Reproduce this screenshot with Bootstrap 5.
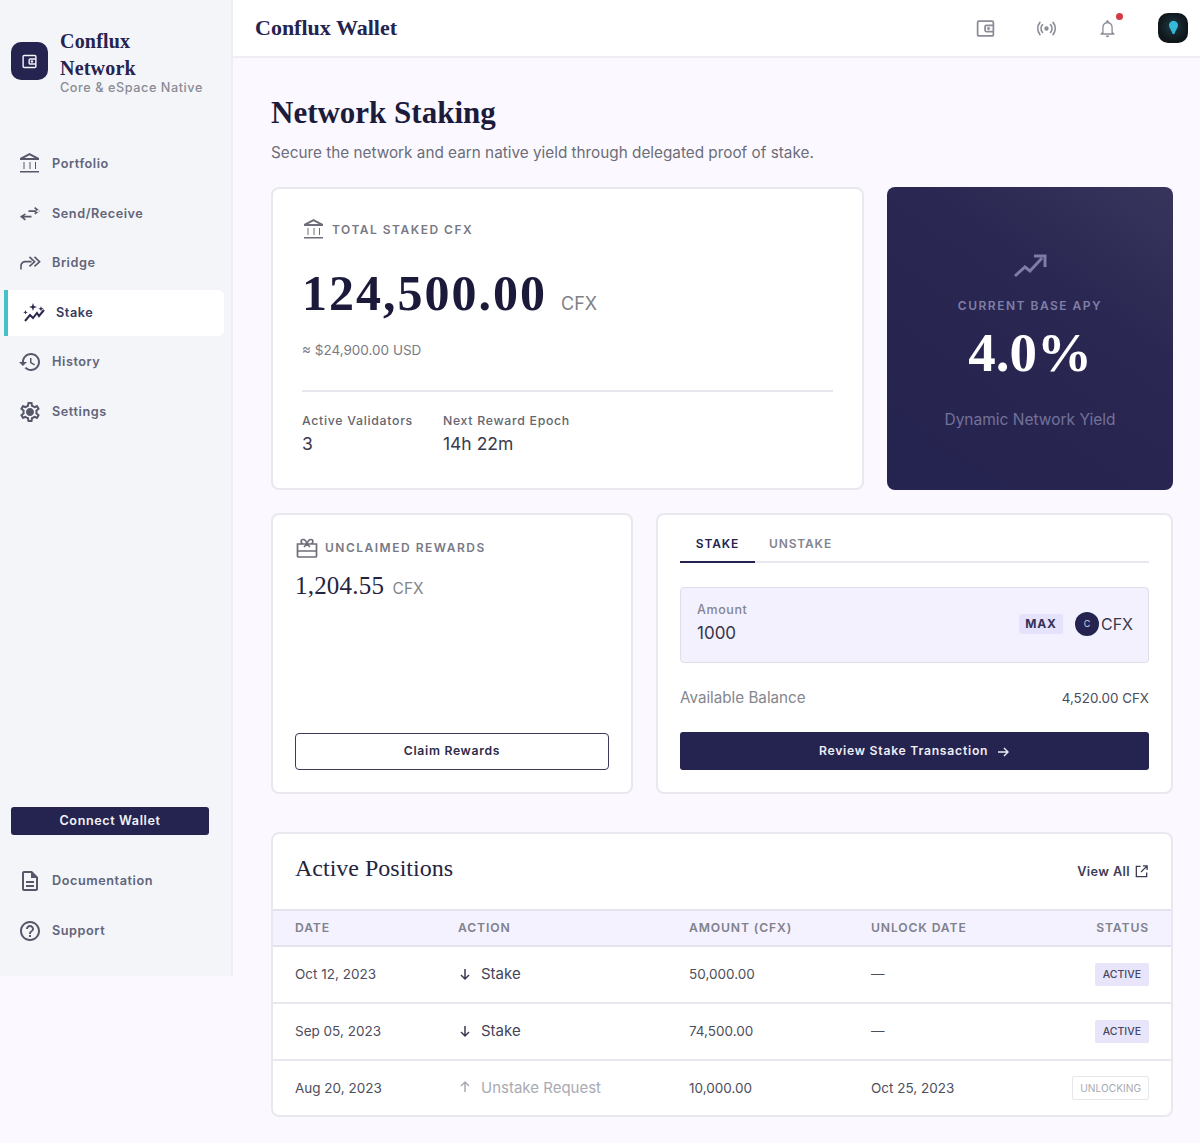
<!DOCTYPE html>
<html lang="en">
<head>
    <meta charset="UTF-8">
    <meta name="viewport" content="width=device-width, initial-scale=1">
    <title>Conflux Wallet</title>
    <link href="https://cdn.jsdelivr.net/npm/bootstrap@5.3.0/dist/css/bootstrap.min.css" rel="stylesheet">
    <style>
        body {
            background: #fbf9ff;
            font-family: Inter, "Liberation Sans", sans-serif;
            color: #1b1b3a;
            margin: 0;
        }
        .serif { font-family: "Liberation Serif", serif; }
        .side-bar {
            width: 233px;
            height: 976px;
            background: #f3f5f9;
            border-right: 2px solid #eceef3;
            flex-shrink: 0;
        }
        .brand-box { padding: 28px 11px 0; height: 141px; }
        .brand-icon {
            width: 37px;
            height: 38px;
            border-radius: 10px;
            background: #25234f;
            margin-top: 14px;
        }
        .brand-name { font-size: 20px; line-height: 27px; font-weight: 700; letter-spacing: .2px; color: #25234f; }
        .brand-sub { font-size: 12.7px; line-height: 13px; color: #8a8b94; letter-spacing: .55px; font-weight: 500; margin-top: -1px; }
        .side-link {
            height: 46px;
            margin: 0 7px 3.5px 4px;
            padding-left: 14px;
            gap: 10px;
            font-size: 12.7px;
            font-weight: 600;
            letter-spacing: .55px;
            color: #62647a;
            text-decoration: none;
            border-radius: 0 6px 6px 0;
        }
        .side-link svg { width: 24px; height: 24px; fill: #565869; flex-shrink: 0; }
        .side-link.is-active {
            background: #fff;
            color: #3c3a5e;
            border-left: 4px solid #45c1c7;
        }
        .side-link.is-active svg { fill: none; stroke: #2b2950; }
        .connect-btn {
            display: block;
            width: 198px;
            height: 28px;
            margin: 0 0 23px 11px;
            padding: 0;
            background: #25234f;
            border: 0;
            border-radius: 3px;
            color: #f2f2f8;
            font-size: 12.6px;
            font-weight: 600;
            letter-spacing: .6px;
        }
        .side-foot { padding-bottom: 19px; }
        .top-bar {
            height: 58px;
            background: #fff;
            border-bottom: 2px solid #efeef5;
            padding: 0 12px 0 22px;
        }
        .top-title { font-size: 22px; font-weight: 700; color: #25234f; margin-bottom: 2px; }
        .top-icons { gap: 40px; }
        .top-icons svg { width: 21px; height: 21px; }
        .bell-dot {
            position: absolute;
            top: -5px;
            right: -5px;
            width: 7px;
            height: 7px;
            border-radius: 50%;
            background: #d33a44;
        }
        .avatar-box {
            width: 30px;
            height: 30px;
            border-radius: 10px;
            background: radial-gradient(circle at 50% 45%, #1d3a44 0%, #10171b 65%);
        }
        .page-body { padding: 35px 27px 26px 38px; }
        .page-title { font-size: 31px; line-height: 40px; font-weight: 700; color: #1c1b3c; margin: 0 0 8px; }
        .page-sub { font-size: 15.3px; line-height: 24px; color: #6c6d78; margin: 0 0 22px; }
        .panel {
            border: 2px solid #e9e8ef;
            border-radius: 8px;
            background: #fff;
        }
        .top-row { display: grid; grid-template-columns: 593px 286px; gap: 23px; height: 303px; margin-bottom: 23px; }
        .mid-row { display: grid; grid-template-columns: 362px 517px; gap: 23px; height: 281px; margin-bottom: 38px; }
        .staked-panel { padding: 29px 29px 0; }
        .label-row { gap: 6px; }
        .cap-label { font-size: 12px; font-weight: 600; letter-spacing: 1.5px; color: #787985; }
        .label-icon { width: 24px; height: 24px; fill: #6d6e79; }
        .big-value { font-size: 50px; line-height: 56px; font-weight: 700; letter-spacing: 2px; color: #1b1a3b; }
        .big-unit { font-size: 18px; color: #808188; margin-left: 14px; }
        .value-line { margin-top: 23px; }
        .usd-line { font-size: 13.5px; color: #797a84; margin-top: 19px; line-height: 20px; }
        .stat-row { border-top: 2px solid #e6e6ec; margin-top: 30px; padding-top: 20px; gap: 30px; }
        .stat-label { font-size: 12.3px; font-weight: 500; letter-spacing: .7px; color: #65666f; line-height: 18px; }
        .stat-value { font-size: 17.5px; line-height: 28px; color: #3a3a4e; }
        .apy-panel {
            border: 0;
            border-radius: 8px;
            background: linear-gradient(215deg, #37355c 0%, #2a2852 35%, #25234f 100%);
            color: #fff;
            text-align: center;
            padding-top: 64px;
        }
        .apy-icon { width: 34px; height: 28px; display: block; margin: 0 auto; }
        .apy-label { font-size: 12px; font-weight: 600; letter-spacing: 1.5px; color: #807fa6; margin-top: 17px; line-height: 20px; }
        .apy-value { font-size: 55px; line-height: 60px; font-weight: 700; margin-top: 7px; }
        .apy-sub { font-size: 15.5px; color: #73729a; margin-top: 25px; line-height: 24px; }
        .rewards-panel { padding: 21px 22px 22px; }
        .reward-value { font-size: 25px; line-height: 36px; letter-spacing: .2px; color: #25243f; margin-top: 8px; }
        .reward-unit { font-family: Inter, sans-serif; font-size: 15.5px; letter-spacing: 0; color: #82838b; margin-left: 2px; }
        .claim-btn {
            height: 37px;
            border: 1.5px solid #3b3a5a;
            border-radius: 4px;
            background: #fff;
            color: #2c2b4a;
            font-size: 12.2px;
            font-weight: 600;
            letter-spacing: .7px;
            padding: 0;
        }
        .stake-panel { padding: 10px 22px 0; }
        .tab-strip { border-bottom: 2px solid #e9e8ef; height: 38px; margin-bottom: 24px; }
        .tab-item {
            width: 75px;
            margin-bottom: -2px;
            padding-top: 10px;
            margin-right: 14px;
            text-align: center;
            font-size: 12px;
            letter-spacing: .85px;
            font-weight: 600;
            color: #838490;
            text-decoration: none;
        }
        .tab-item.is-active { color: #25234f; border-bottom: 2px solid #25234f; }
        .tab-item + .tab-item { width: auto; }
        .amount-box {
            height: 76px;
            background: #f3f1fe;
            border: 1.5px solid #dfdee8;
            border-radius: 4px;
            padding: 0 15px 2px 16px;
        }
        .amount-label { font-size: 12.5px; font-weight: 500; letter-spacing: .6px; color: #85858f; line-height: 16px; margin-bottom: 1px; }
        .amount-value { font-size: 17px; line-height: 28px; color: #34344a; }
        .max-tag {
            width: 44px;
            height: 20px;
            line-height: 20px;
            text-align: center;
            background: #e5e2fb;
            color: #33325a;
            border-radius: 2px;
            font-size: 12px;
            font-weight: 700;
            letter-spacing: .8px;
            margin-right: 12px;
        }
        .coin-dot {
            width: 24px;
            height: 24px;
            border-radius: 50%;
            background: #25234f;
            color: #d5d4e4;
            font-size: 9px;
            line-height: 24px;
            text-align: center;
            margin-right: 2px;
        }
        .coin-name { font-size: 16px; color: #3a3a4e; }
        .balance-row { font-size: 15.2px; color: #85868e; margin: 23px 0 22px; line-height: 24px; }
        .balance-amount { font-size: 13.4px; color: #4a4b5a; }
        .review-btn {
            width: 100%;
            height: 38px;
            background: #25234f;
            border: 0;
            border-radius: 3px;
            color: #eeeef5;
            font-size: 12.2px;
            font-weight: 600;
            letter-spacing: .75px;
            padding: 0;
        }
        .positions-head { height: 75px; padding: 0 22px; }
        .positions-title { font-size: 24px; color: #25243f; margin: 0 0 6px; font-weight: 400; }
        .view-link { font-size: 12.7px; font-weight: 600; letter-spacing: .4px; color: #3c3c55; text-decoration: none; }
        .positions-table { margin: 0; table-layout: fixed; width: 100%; }
        .positions-table th {
            background: #f4f2fe;
            border-top: 2px solid #e4e3ec;
            border-bottom: 2px solid #e4e3ec;
            height: 36px;
            padding: 0;
            font-size: 12.2px;
            font-weight: 600;
            letter-spacing: .85px;
            color: #80818c;
            vertical-align: middle;
        }
        .positions-table td {
            height: 57px;
            padding: 0;
            border-bottom: 2px solid #e9e8ef;
            font-size: 13.5px;
            color: #4d4e5c;
            vertical-align: middle;
            background: transparent;
        }
        .positions-table tr:last-child td { border-bottom: 0; height: 55px; }
        .positions-table .col-first { padding-left: 22px; }
        .positions-table .col-last { padding-right: 22px; text-align: right; }
        .action-cell { font-size: 15px; color: #44445a; gap: 9px; }
        .action-cell svg { width: 14px; height: 14px; stroke: #3a3a55; fill: none; stroke-width: 1.5; margin-bottom: 2px; }
        .action-cell.is-muted { color: #a9aab2; }
        .action-cell.is-muted svg { stroke: #a9aab2; }
        .status-tag {
            display: inline-block;
            font-size: 10.5px;
            font-weight: 500;
            padding: 0 8px;
            line-height: 23px;
            border-radius: 2px;
            background: #e8e5fb;
            color: #46465f;
        }
        .status-tag.is-pending { background: #fff; color: #a9aab2; border: 1.5px solid #e6e6ec; line-height: 22px; font-weight: 400; font-size: 10.2px; padding: 0 7px; }
    </style>
</head>
<body>
<svg width="0" height="0" class="position-absolute">
    <symbol id="ic-bank" viewBox="0 0 24 24"><path d="M6.500 10h-1v7h1v-7zm6 0h-1v7h1v-7zm8.500 9H2v1.500h19V19zm-3-9h-1v7h1v-7zm-6.500-6.740L16.710 6H6.290l5.210-2.740m0-2.260L2 6v2h19V6l-9.500-5z"/></symbol>
    <symbol id="ic-swap" viewBox="0 0 24 24"><path d="M2.500 15.500h11v-1.800h-11zM6.800 11.500 2 14.600l4.800 3.900 1.100-1.300-3.200-2.600 3.300-2.100zM10.500 10h11V8.200h-11zM17.200 5l4.800 4.100-4.800 3.400-1-1.400 3-2.100-3.100-2.700z"/></symbol>
    <symbol id="ic-bridge" viewBox="0 0 24 24"><path d="M3.800 18.500H2.200V15c0-3 2.200-5.200 5.200-5.200h6.200V11.500H7.400c-2.100 0-3.600 1.500-3.600 3.500zM12 5.200l5.800 5.500-5.800 5.300-1.100-1.200 4.500-4.100-4.500-4.300zM17 5.200l5.800 5.500-5.800 5.300-1.100-1.200 4.500-4.100-4.500-4.300z"/></symbol>
    <symbol id="ic-history" viewBox="0 0 24 24"><path d="M13 3c-4.970 0-9 4.030-9 9H1l3.890 3.890.07.14L9 12H6c0-3.870 3.130-7 7-7s7 3.130 7 7-3.130 7-7 7c-1.930 0-3.680-.79-4.940-2.060l-1.420 1.420C8.270 19.990 10.510 21 13 21c4.970 0 9-4.030 9-9s-4.030-9-9-9zm-1 5v5l4.280 2.540.72-1.210-3.500-2.080V8H12z"/></symbol>
    <symbol id="ic-gear" viewBox="0 0 24 24"><path d="M19.430 12.980c.04-.32.07-.64.07-.98 0-.34-.03-.66-.07-.98l2.110-1.650c.19-.15.24-.42.12-.64l-2-3.460c-.09-.16-.26-.25-.44-.25-.06 0-.12.01-.17.03l-2.490 1c-.52-.4-1.080-.73-1.690-.98l-.38-2.650C14.460 2.180 14.250 2 14 2h-4c-.25 0-.46.18-.49.42l-.38 2.650c-.61.25-1.170.59-1.690.98l-2.490-1c-.06-.02-.12-.03-.18-.03-.17 0-.34.09-.43.25l-2 3.460c-.13.22-.07.49.12.64l2.110 1.650c-.04.32-.07.65-.07.98 0 .33.03.66.07.98l-2.110 1.650c-.19.15-.24.42-.12.64l2 3.460c.09.16.26.25.44.25.06 0 .12-.01.17-.03l2.490-1c.52.4 1.080.73 1.690.98l.38 2.650c.03.24.24.42.49.42h4c.25 0 .46-.18.49-.42l.38-2.650c.61-.25 1.170-.59 1.690-.98l2.490 1c.06.02.12.03.18.03.17 0 .34-.09.43-.25l2-3.460c.12-.22.07-.49-.12-.64l-2.110-1.650zm-1.980-1.710c.04.31.05.52.05.73 0 .21-.02.43-.05.73l-.14 1.130.89.7 1.080.84-.7 1.210-1.270-.51-1.040-.42-.9.68c-.43.32-.84.56-1.250.73l-1.060.43-.16 1.130-.2 1.350h-1.400l-.19-1.350-.16-1.130-1.060-.43c-.43-.18-.83-.41-1.230-.71l-.91-.7-1.060.43-1.270.51-.7-1.210 1.080-.84.89-.7-.14-1.130c-.03-.31-.05-.54-.05-.74s.02-.43.05-.73l.14-1.130-.89-.7-1.080-.84.7-1.210 1.270.51 1.040.42.9-.68c.43-.32.84-.56 1.250-.73l1.060-.43.16-1.130.2-1.350h1.390l.19 1.350.16 1.130 1.060.43c.43.18.83.41 1.230.71l.91.7 1.060-.43 1.270-.51.7 1.210-1.070.85-.89.7.14 1.130zM12 8c-2.210 0-4 1.790-4 4s1.790 4 4 4 4-1.790 4-4-1.790-4-4-4z"/></symbol>
    <symbol id="ic-doc" viewBox="0 0 24 24"><path d="M8 16h8v2H8zm0-4h8v2H8zm6-10H6c-1.100 0-2 .9-2 2v16c0 1.100.89 2 1.990 2H18c1.100 0 2-.9 2-2V8l-6-6zm4 18H6V4h7v5h5v11z"/></symbol>
    <symbol id="ic-help" viewBox="0 0 24 24"><path d="M11 18h2v-2h-2v2zm1-16C6.480 2 2 6.480 2 12s4.480 10 10 10 10-4.480 10-10S17.520 2 12 2zm0 18c-4.410 0-8-3.590-8-8s3.590-8 8-8 8 3.590 8 8-3.590 8-8 8zm0-14c-2.210 0-4 1.790-4 4h2c0-1.100.9-2 2-2s2 .9 2 2c0 2-3 1.750-3 5h2c0-2.250 3-2.500 3-5 0-2.210-1.790-4-4-4z"/></symbol>
    <symbol id="ic-bell" viewBox="0 0 24 24"><path d="M12 22c1.100 0 2-.9 2-2h-4c0 1.100.9 2 2 2zm6-6v-5c0-3.070-1.630-5.640-4.500-6.320V4c0-.83-.67-1.500-1.500-1.500s-1.500.67-1.500 1.500v.68C7.640 5.360 6 7.920 6 11v5l-2 2v1h16v-1l-2-2zm-1.500 1.500h-9V11c0-2.480 1.500-5 4.500-5s4.500 2.520 4.500 5z"/></symbol>
    <symbol id="ic-gift" viewBox="0 0 24 24"><path fill="none" stroke="#6d6e79" stroke-width="1.700" d="M2.500 8h19v12a1 1 0 0 1-1 1h-17a1 1 0 0 1-1-1zM2.500 15h19M8 8c-2.500-1-2.500-4.500 0-4.500 2 0 3.500 2.500 4 4.500 .5-2 2-4.500 4-4.500 2.500 0 2.500 3.500 0 4.500M12 8l-3 3M12 8l3 3"/></symbol>
    <symbol id="ic-wallet" viewBox="0 0 24 24"><path fill="none" stroke-width="2" d="M4.500 3.500h15a1.500 1.500 0 0 1 1.500 1.500v14a1.500 1.500 0 0 1-1.500 1.500h-15A1.500 1.500 0 0 1 3 19V5a1.500 1.500 0 0 1 1.500-1.500zM21 8.500h-8a1.500 1.500 0 0 0-1.500 1.500v4a1.500 1.500 0 0 0 1.500 1.500h8"/><circle cx="15.500" cy="12" r="1.300"/></symbol>
</svg>

<div class="d-flex align-items-start">
    <aside class="side-bar d-flex flex-column">
        <div class="brand-box d-flex gap-2">
            <div class="brand-icon d-flex align-items-center justify-content-center me-1">
                <svg width="17" height="17" viewBox="0 0 24 24" stroke="#f3f3f8" fill="#f3f3f8"><use href="#ic-wallet"/></svg>
            </div>
            <div>
                <div class="brand-name serif">Conflux<br>Network</div>
                <div class="brand-sub">Core &amp; eSpace Native</div>
            </div>
        </div>
        <nav class="d-flex flex-column">
            <a class="side-link d-flex align-items-center" href="#"><svg viewBox="0 0 24 24"><use href="#ic-bank"/></svg>Portfolio</a>
            <a class="side-link d-flex align-items-center" href="#"><svg viewBox="0 0 24 24"><use href="#ic-swap"/></svg>Send/Receive</a>
            <a class="side-link d-flex align-items-center" href="#"><svg viewBox="0 0 24 24"><use href="#ic-bridge"/></svg>Bridge</a>
            <a class="side-link is-active d-flex align-items-center" href="#">
                <svg viewBox="0 0 24 24" stroke-width="2"><path d="M3 20l5-6 3 3 4-5 2 3 5-6"/><path fill="#2b2950" stroke="none" d="M11 2l1 3 3 1-3 1-1 3-1-3-3-1 3-1zM19 5l.7 2 2 .7-2 .7-.7 2-.7-2-2-.7 2-.7zM3.500 9l.6 1.700 1.700.6-1.700.6-.6 1.700-.6-1.700-1.700-.6 1.700-.6z"/></svg>
                Stake</a>
            <a class="side-link d-flex align-items-center" href="#"><svg viewBox="0 0 24 24"><use href="#ic-history"/></svg>History</a>
            <a class="side-link d-flex align-items-center" href="#"><svg viewBox="0 0 24 24"><use href="#ic-gear"/></svg>Settings</a>
        </nav>
        <div class="side-foot mt-auto">
            <button class="connect-btn btn" type="button">Connect Wallet</button>
            <a class="side-link d-flex align-items-center" href="#"><svg viewBox="0 0 24 24"><use href="#ic-doc"/></svg>Documentation</a>
            <a class="side-link d-flex align-items-center" href="#"><svg viewBox="0 0 24 24"><use href="#ic-help"/></svg>Support</a>
        </div>
    </aside>

    <div class="flex-grow-1">
        <header class="top-bar d-flex align-items-center justify-content-between">
            <div class="top-title serif">Conflux Wallet</div>
            <div class="top-icons d-flex align-items-center">
                <svg viewBox="0 0 24 24" stroke="#8b8c98" fill="#8b8c98"><use href="#ic-wallet"/></svg>
                <svg viewBox="0 0 24 24" fill="none" stroke="#8b8c98" stroke-width="1.800" stroke-linecap="round"><circle cx="12" cy="12" r="1.600" fill="#8b8c98"/><path d="M7.500 7.500a7 7 0 0 0 0 9M16.500 7.500a7 7 0 0 1 0 9M4.500 5a11 11 0 0 0 0 14M19.500 5a11 11 0 0 1 0 14"/></svg>
                <div class="position-relative d-flex">
                    <svg viewBox="0 0 24 24" fill="#8b8c98"><use href="#ic-bell"/></svg>
                    <span class="bell-dot"></span>
                </div>
                <div class="avatar-box d-flex align-items-center justify-content-center">
                    <svg viewBox="0 0 24 24" width="18" height="18"><path fill="#36b8d8" d="M12 3c3.300 0 5.200 2.500 5.200 5.300 0 3-3 6-4.200 10h-2C9.800 14.300 6.800 11.300 6.800 8.300 6.800 5.500 8.700 3 12 3z"/></svg>
                </div>
            </div>
        </header>

        <main class="page-body">
            <h1 class="page-title serif">Network Staking</h1>
            <p class="page-sub">Secure the network and earn native yield through delegated proof of stake.</p>

            <div class="top-row">
                <section class="panel staked-panel">
                    <div class="label-row d-flex align-items-center">
                        <svg class="label-icon" viewBox="0 0 24 24"><use href="#ic-bank"/></svg>
                        <span class="cap-label">TOTAL STAKED CFX</span>
                    </div>
                    <div class="value-line"><span class="big-value serif">124,500.00</span><span class="big-unit">CFX</span></div>
                    <div class="usd-line">≈ $24,900.00 USD</div>
                    <div class="stat-row d-flex">
                        <div>
                            <div class="stat-label">Active Validators</div>
                            <div class="stat-value">3</div>
                        </div>
                        <div>
                            <div class="stat-label">Next Reward Epoch</div>
                            <div class="stat-value">14h 22m</div>
                        </div>
                    </div>
                </section>
                <section class="panel apy-panel">
                    <svg class="apy-icon" viewBox="0 0 34 28" fill="none" stroke="#7e7da6" stroke-width="3"><path d="M2 25l10-9 5 4 12-13"/><path d="M21 5h11v11" fill="none"/></svg>
                    <div class="apy-label">CURRENT BASE APY</div>
                    <div class="apy-value serif">4.0%</div>
                    <div class="apy-sub">Dynamic Network Yield</div>
                </section>
            </div>

            <div class="mid-row">
                <section class="panel rewards-panel d-flex flex-column">
                    <div class="label-row d-flex align-items-center">
                        <svg class="label-icon" viewBox="0 0 24 24"><use href="#ic-gift"/></svg>
                        <span class="cap-label">UNCLAIMED REWARDS</span>
                    </div>
                    <div class="reward-value serif">1,204.55 <span class="reward-unit">CFX</span></div>
                    <button class="claim-btn btn mt-auto" type="button">Claim Rewards</button>
                </section>
                <section class="panel stake-panel">
                    <div class="tab-strip d-flex">
                        <a class="tab-item is-active" href="#">STAKE</a>
                        <a class="tab-item" href="#">UNSTAKE</a>
                    </div>
                    <div class="amount-box d-flex align-items-center justify-content-between">
                        <div>
                            <div class="amount-label">Amount</div>
                            <div class="amount-value">1000</div>
                        </div>
                        <div class="d-flex align-items-center">
                            <span class="max-tag">MAX</span>
                            <span class="coin-dot">C</span>
                            <span class="coin-name">CFX</span>
                        </div>
                    </div>
                    <div class="balance-row d-flex align-items-center justify-content-between">
                        <span>Available Balance</span>
                        <span class="balance-amount">4,520.00 CFX</span>
                    </div>
                    <button class="review-btn btn" type="button">Review Stake Transaction
                        <svg class="ms-1" width="14" height="14" viewBox="0 0 14 14" fill="none" stroke="#eeeef5" stroke-width="1.400"><path d="M2 7h10M8 3l4 4-4 4"/></svg>
                    </button>
                </section>
            </div>

            <section class="panel overflow-hidden">
                <div class="positions-head d-flex align-items-center justify-content-between">
                    <h2 class="positions-title serif">Active Positions</h2>
                    <a class="view-link d-flex align-items-center gap-1" href="#">View All
                        <svg width="15" height="15" viewBox="0 0 16 16" fill="none" stroke="#3c3c55" stroke-width="1.400"><path d="M7 2.500H2.500v11h11V9M9.500 2h4.500v4.500M14 2 7.500 8.500"/></svg>
                    </a>
                </div>
                <table class="table positions-table">
                    <colgroup><col style="width:185px"><col style="width:231px"><col style="width:182px"><col style="width:146px"><col></colgroup>
                    <thead>
                        <tr>
                            <th class="col-first">DATE</th>
                            <th>ACTION</th>
                            <th>AMOUNT (CFX)</th>
                            <th>UNLOCK DATE</th>
                            <th class="col-last">STATUS</th>
                        </tr>
                    </thead>
                    <tbody>
                        <tr>
                            <td class="col-first">Oct 12, 2023</td>
                            <td><div class="action-cell d-flex align-items-center"><svg viewBox="0 0 14 14"><path d="M7 2v10M3 8l4 4 4-4"/></svg>Stake</div></td>
                            <td>50,000.00</td>
                            <td>—</td>
                            <td class="col-last"><span class="status-tag">ACTIVE</span></td>
                        </tr>
                        <tr>
                            <td class="col-first">Sep 05, 2023</td>
                            <td><div class="action-cell d-flex align-items-center"><svg viewBox="0 0 14 14"><path d="M7 2v10M3 8l4 4 4-4"/></svg>Stake</div></td>
                            <td>74,500.00</td>
                            <td>—</td>
                            <td class="col-last"><span class="status-tag">ACTIVE</span></td>
                        </tr>
                        <tr>
                            <td class="col-first">Aug 20, 2023</td>
                            <td><div class="action-cell is-muted d-flex align-items-center"><svg viewBox="0 0 14 14"><path d="M7 12V2M3 6l4-4 4 4"/></svg>Unstake Request</div></td>
                            <td>10,000.00</td>
                            <td>Oct 25, 2023</td>
                            <td class="col-last"><span class="status-tag is-pending">UNLOCKING</span></td>
                        </tr>
                    </tbody>
                </table>
            </section>
        </main>
    </div>
</div>

<script src="https://cdn.jsdelivr.net/npm/bootstrap@5.3.0/dist/js/bootstrap.bundle.min.js"></script>
</body>
</html>
